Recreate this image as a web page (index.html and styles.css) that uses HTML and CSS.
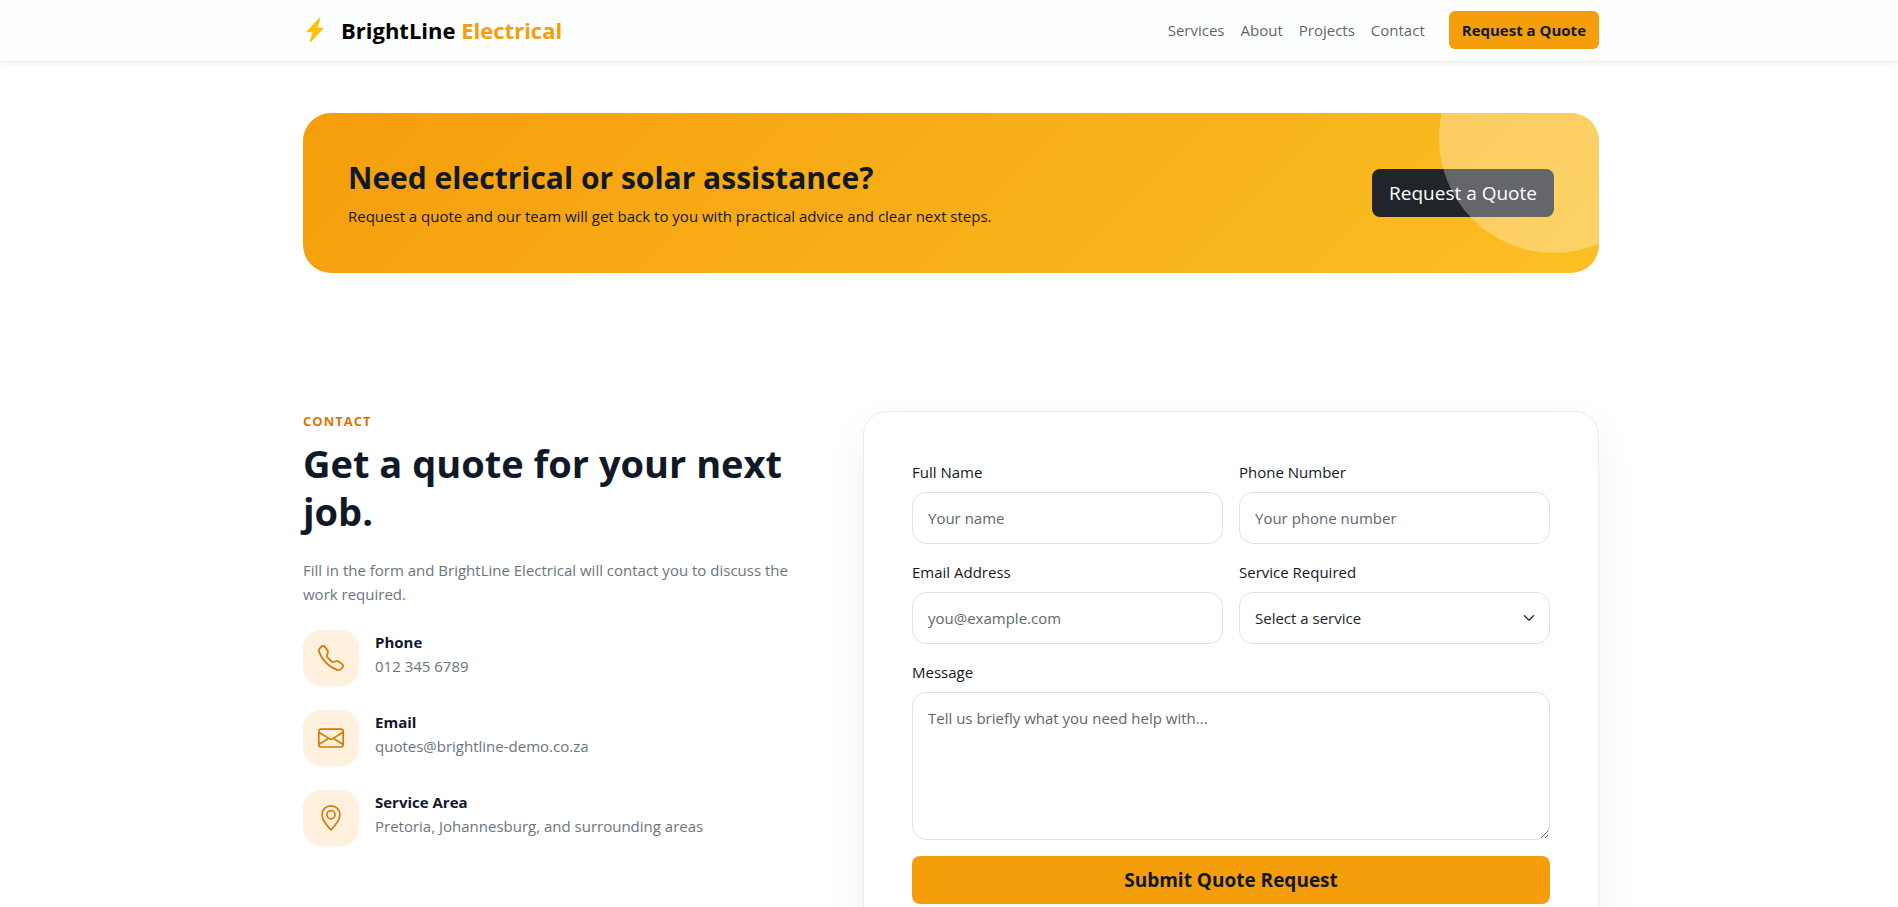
FILE: index.html
```html
<!DOCTYPE html>
<html lang="en">
<head>
    <meta charset="UTF-8">
    <meta name="viewport" content="width=device-width, initial-scale=1.0">
    <title>BrightLine Electrical</title>
    <link rel="stylesheet" href="styles.css">
</head>
<body>
    <header class="navbar">
        <div class="container nav-inner">
            <a class="brand" href="#">
                <svg class="brand-icon" viewBox="0 0 16 16" aria-hidden="true">
                    <path d="M11.251.068a.5.5 0 0 1 .227.58L9.677 6.5H13a.5.5 0 0 1 .364.843l-8 8.5a.5.5 0 0 1-.842-.49L6.323 9.5H3a.5.5 0 0 1-.364-.843l8-8.5a.5.5 0 0 1 .615-.09z"/>
                </svg>
                <span>BrightLine <span class="brand-accent">Electrical</span></span>
            </a>
            <nav class="nav-links">
                <a href="#services">Services</a>
                <a href="#about">About</a>
                <a href="#projects">Projects</a>
                <a href="#contact">Contact</a>
                <a class="btn btn-brand" href="#contact">Request a Quote</a>
            </nav>
        </div>
    </header>

    <main>
        <section class="cta-section">
            <div class="container">
                <div class="cta-box">
                    <div>
                        <h2>Need electrical or solar assistance?</h2>
                        <p>Request a quote and our team will get back to you with practical advice and clear next steps.</p>
                    </div>
                    <a class="btn btn-dark btn-lg" href="#contact">Request a Quote</a>
                </div>
            </div>
        </section>

        <section class="contact-section" id="contact">
            <div class="container contact-grid">
                <div class="contact-info">
                    <span class="section-label">Contact</span>
                    <h2>Get a quote for your next job.</h2>
                    <p class="lead-text">Fill in the form and BrightLine Electrical will contact you to discuss the work required.</p>

                    <div class="contact-list">
                        <div class="contact-item">
                            <div class="contact-icon">
                                <svg viewBox="0 0 16 16" aria-hidden="true">
                                    <path d="M3.654 1.328a.678.678 0 0 0-1.015-.063L1.605 2.3c-.483.484-.661 1.169-.45 1.77a17.6 17.6 0 0 0 4.168 6.608 17.6 17.6 0 0 0 6.608 4.168c.601.211 1.286.033 1.77-.45l1.034-1.034a.678.678 0 0 0-.063-1.015l-2.307-1.794a.68.68 0 0 0-.58-.122l-2.19.547a1.75 1.75 0 0 1-1.657-.459L5.482 8.062a1.75 1.75 0 0 1-.46-1.657l.548-2.19a.68.68 0 0 0-.122-.58zM1.884.511a1.745 1.745 0 0 1 2.612.163L6.29 2.98c.329.423.445.974.315 1.494l-.547 2.19a.68.68 0 0 0 .178.643l2.457 2.457a.68.68 0 0 0 .644.178l2.189-.547a1.75 1.75 0 0 1 1.494.315l2.306 1.794c.829.645.905 1.87.163 2.611l-1.034 1.034c-.74.74-1.846 1.065-2.877.702a18.6 18.6 0 0 1-7.01-4.42 18.6 18.6 0 0 1-4.42-7.009c-.362-1.03-.037-2.137.703-2.877z"/>
                                </svg>
                            </div>
                            <div>
                                <strong>Phone</strong>
                                <p>012 345 6789</p>
                            </div>
                        </div>
                        <div class="contact-item">
                            <div class="contact-icon">
                                <svg viewBox="0 0 16 16" aria-hidden="true">
                                    <path d="M0 4a2 2 0 0 1 2-2h12a2 2 0 0 1 2 2v8a2 2 0 0 1-2 2H2a2 2 0 0 1-2-2zm2-1a1 1 0 0 0-1 1v.217l7 4.2 7-4.2V4a1 1 0 0 0-1-1zm13 2.383-4.708 2.825L15 11.105zm-.034 6.876-5.64-3.471L8 9.583l-1.326-.795-5.64 3.47A1 1 0 0 0 2 13h12a1 1 0 0 0 .966-.741M1 11.105l4.708-2.897L1 5.383z"/>
                                </svg>
                            </div>
                            <div>
                                <strong>Email</strong>
                                <p>quotes@brightline-demo.co.za</p>
                            </div>
                        </div>
                        <div class="contact-item">
                            <div class="contact-icon">
                                <svg viewBox="0 0 16 16" aria-hidden="true">
                                    <path d="M12.166 8.94c-.524 1.062-1.234 2.12-1.96 3.07A32 32 0 0 1 8 14.58a32 32 0 0 1-2.206-2.57c-.726-.95-1.436-2.008-1.96-3.07C3.304 7.867 3 6.862 3 6a5 5 0 0 1 10 0c0 .862-.305 1.867-.834 2.94M8 16s6-5.686 6-10A6 6 0 0 0 2 6c0 4.314 6 10 6 10"/>
                                    <path d="M8 8a2 2 0 1 1 0-4 2 2 0 0 1 0 4m0 1a3 3 0 1 0 0-6 3 3 0 0 0 0 6"/>
                                </svg>
                            </div>
                            <div>
                                <strong>Service Area</strong>
                                <p>Pretoria, Johannesburg, and surrounding areas</p>
                            </div>
                        </div>
                    </div>
                </div>

                <form class="contact-form">
                    <div class="field">
                        <label for="fullName">Full Name</label>
                        <input type="text" id="fullName" placeholder="Your name">
                    </div>
                    <div class="field">
                        <label for="phone">Phone Number</label>
                        <input type="tel" id="phone" placeholder="Your phone number">
                    </div>
                    <div class="field">
                        <label for="email">Email Address</label>
                        <input type="email" id="email" placeholder="you@example.com">
                    </div>
                    <div class="field">
                        <label for="service">Service Required</label>
                        <select id="service">
                            <option>Select a service</option>
                        </select>
                    </div>
                    <div class="field field-wide">
                        <label for="message">Message</label>
                        <textarea id="message" rows="5" placeholder="Tell us briefly what you need help with..."></textarea>
                    </div>
                    <button type="submit" class="btn btn-brand btn-lg field-wide">Submit Quote Request</button>
                </form>
            </div>
        </section>
    </main>
</body>
</html>
```

FILE: styles.css
```css
* {
    box-sizing: border-box;
}

body {
    margin: 0;
    background: #fff;
    color: #111827;
    font-family: "Segoe UI", "Open Sans", "Noto Sans", sans-serif;
    font-size: 15px;
    line-height: 24px;
}

h2,
p {
    margin: 0;
}

a {
    text-decoration: none;
}

.container {
    max-width: 1320px;
    margin: 0 auto;
    padding: 0 10px 0 14px;
}

/* Navbar */
.navbar {
    padding: 11px 0 12px;
    background: #fdfefe;
    border-bottom: 1px solid #e9eeee;
    box-shadow: 0 2px 4px rgba(0, 0, 0, 0.05);
}

.nav-inner {
    display: flex;
    align-items: center;
    justify-content: space-between;
}

.brand {
    display: flex;
    align-items: center;
    gap: 14px;
    color: #000;
    font-size: 22px;
    font-weight: 700;
}

.brand-icon {
    width: 24px;
    height: 24px;
    fill: #ffc107;
}

.brand-accent {
    color: #f59e0b;
}

.nav-links {
    display: flex;
    align-items: center;
    gap: 16px;
}

.nav-links a {
    color: rgba(0, 0, 0, 0.65);
}

.nav-links .btn {
    margin-left: 8px;
    color: #111827;
}

/* Buttons */
.btn {
    display: inline-block;
    padding: 6px 12px;
    border: 1px solid transparent;
    border-radius: 6px;
    font-family: inherit;
    font-size: 15px;
    line-height: 24px;
    text-align: center;
    white-space: nowrap;
    cursor: pointer;
}

.btn-brand {
    background: #f59e0b;
    color: #111827;
    font-weight: 700;
}

.btn-dark {
    background: #212529;
    color: #fff;
}

.btn-lg {
    padding: 8px 16px;
    border-radius: 8px;
    font-size: 19px;
    line-height: 30px;
}

/* Call to action */
.cta-section {
    padding: 51px 0 69px;
}

.cta-box {
    position: relative;
    display: flex;
    align-items: center;
    justify-content: space-between;
    padding: 45px;
    border-radius: 28px;
    background: linear-gradient(135deg, #f59e0b, #fbbf24);
    overflow: hidden;
}

.cta-box::after {
    content: "";
    position: absolute;
    top: -90px;
    right: -70px;
    width: 230px;
    height: 230px;
    border-radius: 50%;
    background: rgba(255, 255, 255, 0.3);
}

.cta-box h2 {
    margin-bottom: 7px;
    font-size: 30px;
    line-height: 39px;
}

/* Contact */
.contact-section {
    padding: 69px 0 80px;
}

.contact-grid {
    display: grid;
    grid-template-columns: repeat(12, 1fr);
    gap: 48px;
}

.contact-info {
    grid-column: span 5;
}

.section-label {
    display: block;
    margin-bottom: 8px;
    color: #d97706;
    font-size: 13px;
    font-weight: 700;
    line-height: 20px;
    letter-spacing: 1px;
    text-transform: uppercase;
}

.contact-info h2 {
    margin-bottom: 23px;
    font-size: 38px;
    line-height: 48px;
}

.lead-text,
.contact-item p {
    color: #6c757d;
}

.contact-list {
    display: grid;
    gap: 24px;
    margin-top: 24px;
}

.contact-item {
    display: flex;
    gap: 16px;
}

.contact-icon {
    display: flex;
    align-items: center;
    justify-content: center;
    width: 56px;
    height: 56px;
    border-radius: 18px;
    background: #fff1dd;
}

.contact-icon svg {
    width: 26px;
    height: 26px;
    fill: #d97706;
}

/* Quote form */
.contact-form {
    grid-column: span 7;
    display: grid;
    grid-template-columns: 1fr 1fr;
    gap: 16px;
    padding: 48px;
    border: 1px solid #ececee;
    border-radius: 24px;
    background: #fff;
    box-shadow: 0 16px 40px rgba(17, 24, 39, 0.06);
}

.field {
    display: flex;
    flex-direction: column;
    gap: 8px;
}

.field-wide {
    grid-column: 1 / -1;
}

.field input,
.field select,
.field textarea {
    display: block;
    width: 100%;
    padding: 13px 15px;
    border: 1px solid #dee2e6;
    border-radius: 14px;
    background-color: #fff;
    color: #212529;
    font-family: inherit;
    font-size: 15px;
    line-height: 24px;
}

.field input,
.field select {
    height: 52px;
}

.field textarea {
    resize: vertical;
}

.field ::placeholder {
    color: #5f666d;
    opacity: 1;
}

.field select {
    appearance: none;
    background-image: url("data:image/svg+xml,%3csvg xmlns='http://www.w3.org/2000/svg' viewBox='0 0 16 16'%3e%3cpath fill='none' stroke='%23343a40' stroke-linecap='round' stroke-linejoin='round' stroke-width='2' d='m2 5 6 6 6-6'/%3e%3c/svg%3e");
    background-repeat: no-repeat;
    background-position: right 12px center;
    background-size: 16px 12px;
}
```
